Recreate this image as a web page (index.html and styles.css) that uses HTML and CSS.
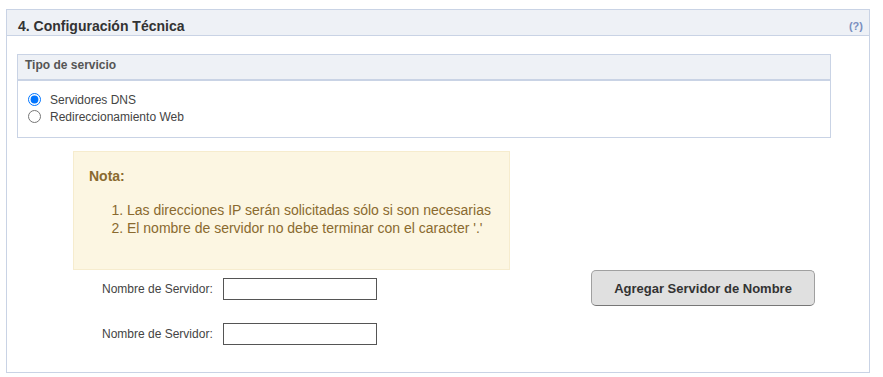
FILE: index.html
```html
<!DOCTYPE html>
<html lang="es">
<head>
  <meta charset="UTF-8" />
  <title>Configuración Técnica</title>
  <link rel="stylesheet" href="styles.css">
</head>
<body>
  <div class="panel">
    <div class="panel-header">
      <h2>4. Configuración Técnica</h2>
      <a href="#" class="help">(?)</a>
    </div>

    <div class="panel-body">
      <div class="box">
        <div class="box-header">Tipo de servicio</div>
        <div class="box-body">
          <label class="radio"><input type="radio" name="tipo" checked> Servidores DNS</label>
          <label class="radio"><input type="radio" name="tipo"> Redireccionamiento Web</label>
        </div>
      </div>

      <div class="nota">
        <strong>Nota:</strong>
        <ol>
          <li>Las direcciones IP serán solicitadas sólo si son necesarias</li>
          <li>El nombre de servidor no debe terminar con el caracter '.'</li>
        </ol>
      </div>

      <div class="servers">
        <div class="server-fields">
          <label for="ns1">Nombre de Servidor:</label>
          <input type="text" id="ns1">
          <label for="ns2">Nombre de Servidor:</label>
          <input type="text" id="ns2">
        </div>
        <button type="button" class="add-btn">Agregar Servidor de Nombre</button>
      </div>
    </div>
  </div>
</body>
</html>
```

FILE: styles.css
```css
* {
  box-sizing: border-box;
  margin: 0;
  padding: 0;
}

body {
  font-family: 'Liberation Sans', Arial, sans-serif;
  background: #ffffff;
  color: #333;
  padding: 9px 0 0 6px;
}

.panel {
  width: 864px;
  height: 364px;
  border: 1px solid #c9d3e5;
}

.panel-header {
  height: 26px;
  background-color: #eef1f6;
  border-bottom: 1px solid #c9d3e5;
  display: flex;
  align-items: center;
  justify-content: space-between;
  padding: 6px 6px 0 11px;
}

.panel-header h2 {
  font-size: 14px;
  font-weight: bold;
  color: #333;
}

.help {
  font-size: 11px;
  font-weight: bold;
  color: #7a8fbf;
  text-decoration: none;
  margin-top: 1px;
}

.panel-body {
  padding: 18px 0 0 10px;
}

.box {
  width: 814px;
  border: 1px solid #c9d3e5;
}

.box-header {
  height: 26px;
  background-color: #eef1f6;
  border-bottom: 2px solid #c9d3e5;
  font-size: 12px;
  font-weight: bold;
  color: #555;
  padding: 3px 7px 0;
}

.box-body {
  padding: 10px 9px 12px;
}

.radio {
  display: flex;
  align-items: center;
  font-size: 12px;
  color: #444;
  height: 17px;
}

.radio input {
  width: 13px;
  height: 13px;
  margin: 0 9px 0 1px;
}

.nota {
  width: 437px;
  height: 119px;
  margin: 13px 0 0 56px;
  background-color: #fcf6e2;
  border: 1px solid #f6ecce;
  color: #8a6a2f;
  padding: 16px 15px;
  font-size: 14px;
}

.nota strong {
  display: block;
  margin-bottom: 17px;
}

.nota ol {
  padding-left: 38px;
  line-height: 18px;
}

.servers {
  display: flex;
  align-items: flex-start;
}

.server-fields {
  display: grid;
  grid-template-columns: 110px 154px;
  column-gap: 11px;
  row-gap: 23px;
  align-items: center;
  margin: 8px 0 0 85px;
}

.server-fields label {
  font-size: 12px;
  color: #444;
  text-align: right;
  white-space: nowrap;
}

.server-fields input {
  height: 22px;
  border: 1px solid #555;
  border-radius: 0;
}

.add-btn {
  width: 224px;
  height: 36px;
  margin: 0 0 0 214px;
  background-color: #e0e0e0;
  border: 1px solid #a0a0a0;
  border-bottom-color: #777;
  border-radius: 5px;
  font-family: 'Liberation Sans', Arial, sans-serif;
  font-size: 13px;
  font-weight: bold;
  color: #333;
  cursor: pointer;
}
```
